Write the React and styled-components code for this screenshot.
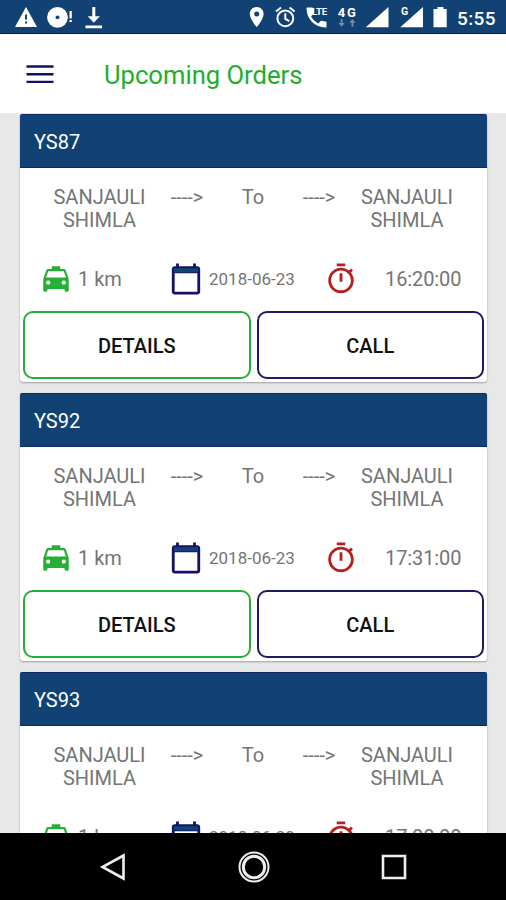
import React from "react";
import styled, { createGlobalStyle } from "styled-components";

const GlobalStyle = createGlobalStyle`
  * { box-sizing: border-box; }
  body {
    margin: 0;
    background: #e8e8e8;
    font-family: Roboto, "Noto Sans", sans-serif;
  }
`

const Screen = styled.div`
  display: flex;
  flex-direction: column;
  width: 506px;
  height: 900px;
  overflow: hidden;
  background: #e8e8e8;
`
const StatusBar = styled.div`
  flex: none;
  height: 34px;
  background: #114273;
  border-bottom: 1px solid #0b1a60;
`
const StatusIcons = styled.svg`
  display: block;
  width: 506px;
  height: 33px;
  fill: #fff;
`
const StatusText = styled.text`
  font-family: Roboto, sans-serif;
  font-weight: ${(props) => props.$weight || 500};
  font-size: ${(props) => props.$size}px;
`
const Header = styled.header`
  flex: none;
  display: flex;
  align-items: center;
  height: 79px;
  padding: 0 27px 0 26px;
  background: #fff;
`
const MenuIcon = styled.svg`
  display: block;
  width: 28px;
  height: 20px;
  stroke: #151061;
  stroke-width: 2.4;
`
const Title = styled.h1`
  margin: 2px 0 0 50px;
  font-size: 25.6px;
  font-weight: 400;
  line-height: 32px;
  color: #1fae2c;
  white-space: nowrap;
`
const OrderList = styled.main`
  flex: 1;
  min-height: 0;
  overflow: hidden;
  display: flex;
  flex-direction: column;
  gap: 11px;
  padding: 1px 19px 0 20px;
`
const Card = styled.section`
  flex: none;
  height: 268px;
  background: #fff;
  border-radius: 3px;
  box-shadow: 0 1px 2px rgba(0, 0, 0, 0.32);
`
const CardHeader = styled.div`
  display: flex;
  align-items: center;
  height: 54px;
  padding: 2px 14px 0;
  background: #114273;
  border: 1px solid #0d2b6b;
  border-width: 1px 0;
  border-radius: 2px 2px 0 0;
  color: #fff;
  font-size: 20px;
`
const Route = styled.div`
  display: grid;
  grid-template-columns: 109px 66px 66px 66px 110px;
  height: 87px;
  padding: 18px 25px 0;
  color: #757575;
  font-size: 20px;
  line-height: 23px;
  text-align: center;
`
const Info = styled.div`
  display: grid;
  grid-template-columns: 39px 91px 40px 115px 61px 1fr;
  align-items: center;
  height: 47px;
  padding: 0 0 0 19px;
  color: #757575;
  font-size: 20px;
  white-space: nowrap;
`
const InfoIcon = styled.svg`
  display: block;
  width: 34px;
  height: 34px;
  fill: ${(props) => props.$color};
`
const OrderDate = styled.span`
  font-size: 17px;
`
const Time = styled.span`
  letter-spacing: -0.1px;
`
const Actions = styled.div`
  display: flex;
  gap: 6px;
  padding: 9px 3px 0;
`
const ActionButton = styled.button`
  flex: 1;
  height: 68px;
  padding: 2px 0 0;
  border: 2px solid ${(props) => props.$color};
  border-radius: 10px;
  background: #fff;
  color: #111;
  font: 500 20px Roboto, sans-serif;
`
const NavBar = styled.nav`
  flex: none;
  display: flex;
  align-items: center;
  justify-content: space-between;
  height: 67px;
  padding: 0 95px 0 96px;
  background: #000;
`
const NavIcon = styled.svg`
  display: block;
  width: 34px;
  height: 34px;
  fill: none;
  stroke: #eee;
  stroke-width: 2.6;
`

const orders = [
  { id: "YS87", distance: "1 km", date: "2018-06-23", time: "16:20:00" },
  { id: "YS92", distance: "1 km", date: "2018-06-23", time: "17:31:00" },
  { id: "YS93", distance: "1 km", date: "2018-06-20", time: "17:00:00" },
]

const TaxiIcon = () => (
  <InfoIcon viewBox="0 0 24 24" $color="#27ae36">
    <path d="M18.92 6.01C18.72 5.42 18.16 5 17.5 5H15V3H9v2H6.5c-.66 0-1.21.42-1.42 1.01L3 12v8c0 .55.45 1 1 1h1c.55 0 1-.45 1-1v-1h12v1c0 .55.45 1 1 1h1c.55 0 1-.45 1-1v-8l-2.08-5.99zM6.5 16c-.83 0-1.5-.67-1.5-1.5S5.67 13 6.5 13s1.5.67 1.5 1.5S7.33 16 6.5 16zm11 0c-.83 0-1.5-.67-1.5-1.5s.67-1.5 1.5-1.5 1.5.67 1.5 1.5-.67 1.5-1.5 1.5zM5 11l1.5-4.5h11L19 11H5z" />
  </InfoIcon>
)

const CalendarIcon = () => (
  <InfoIcon viewBox="0 0 24 24" $color="#171269">
    <path d="M20 3h-1V1h-2v2H7V1H5v2H4c-1.1 0-2 .9-2 2v16c0 1.1.9 2 2 2h16c1.1 0 2-.9 2-2V5c0-1.1-.9-2-2-2zm0 18H4V8h16v13z" />
    <path fill="#114273" d="M3.5 4.3h17v3h-17z" />
  </InfoIcon>
)

const TimerIcon = () => (
  <InfoIcon viewBox="0 0 24 24" $color="#b51f1f">
    <path d="M15 1H9v2h6V1zm-4 13h2V8h-2v6zm8.03-6.61l1.42-1.42c-.43-.51-.9-.99-1.41-1.41l-1.42 1.42C16.07 4.74 14.12 4 12 4c-4.97 0-9 4.03-9 9s4.02 9 9 9 9-4.03 9-9c0-2.12-.74-4.07-1.97-5.61zM12 20c-3.87 0-7-3.13-7-7s3.13-7 7-7 7 3.13 7 7-3.13 7-7 7z" />
  </InfoIcon>
)

const Status = () => (
  <StatusBar>
    <StatusIcons viewBox="0 0 506 33">
      {/* notifications */}
      <path d="M26 7 37 27H15z" />
      <path d="M25 14.5h2v5h-2zm0 7h2v2h-2z" fill="#114273" />
      <circle cx="57.5" cy="17.3" r="10.4" />
      <circle cx="57.5" cy="17.3" r="1.9" fill="#114273" />
      <path d="M69.5 11h2.3v7.5h-2.3zm0 9h2.3v2h-2.3z" />
      <path d="M92.3 7h3v9.2h4.6l-6.1 6.6-6.1-6.6h4.6zM85.500 25.600h16.500v2.600H85.500z" />
      {/* location and alarm */}
      <path d="M256.700 7c-4 0-6.900 3-6.900 6.900 0 5 6.900 13.300 6.900 13.300s6.900-8.300 6.900-13.300c0-3.900-2.900-6.900-6.900-6.900zm0 9.400a2.500 2.500 0 1 1 0-5 2.500 2.500 0 0 1 0 5z" />
      <g fill="none" stroke="#fff" strokeWidth="2">
        <circle cx="285.300" cy="18.300" r="7.900" />
        <path d="M285.300 13.300v5.500l4 2.300M276 11.500l5-4M294.600 11.500l-5-4" />
      </g>
      {/* call over LTE */}
      <path d="M307.500 7.500c-.6 0-1 .4-1 1C306.500 19 315 27.400 325.500 27.400c.6 0 1-.4 1-1v-4c0-.6-.4-1-1-1-1.300 0-2.600-.2-3.700-.6-.4-.1-.8 0-1.100.3l-2.400 2.400c-3.100-1.600-5.600-4.100-7.200-7.200l2.300-2.400c.3-.3.4-.8.300-1.100-.4-1.200-.6-2.400-.6-3.700 0-.9-.4-1.600-1-1.600z" />
      <StatusText x="312" y="14.600" $size="9.500" $weight="700" textLength="15">LTE</StatusText>
      <StatusText x="337.800" y="17" $size="13" $weight="700" textLength="18">4G</StatusText>
      <path opacity=".4" d="M340.700 19h1.800v4h2.200l-3.100 3.700-3.100-3.700h2.200zM351.500 26.700h1.800v-4h2.200l-3.100-3.700-3.100 3.700h2.200z" />
      {/* signal and battery */}
      <path d="M388.500 7v20.300h-22.700z" />
      <path d="M423 7v20.300h-22.700z" />
      <path d="M399 5h10.500v11.500H399z" fill="#114273" />
      <StatusText x="401" y="15" $size="10.500" $weight="700">G</StatusText>
      <path d="M437.500 7h6v2h3.200v18.300h-13.200V9h4z" />
      <StatusText x="457" y="24.600" $size="19" textLength="38.500">5:55</StatusText>
    </StatusIcons>
  </StatusBar>
)

const OrderCard = ({ order }) => {
  return (
    <Card>
      <CardHeader>{order.id}</CardHeader>
      <Route>
        <span>SANJAULI SHIMLA</span>
        <span>----&gt;</span>
        <span>To</span>
        <span>----&gt;</span>
        <span>SANJAULI SHIMLA</span>
      </Route>
      <Info>
        <TaxiIcon />
        <span>{order.distance}</span>
        <CalendarIcon />
        <OrderDate>{order.date}</OrderDate>
        <TimerIcon />
        <Time>{order.time}</Time>
      </Info>
      <Actions>
        <ActionButton $color="#27ae36">DETAILS</ActionButton>
        <ActionButton $color="#1b1b68">CALL</ActionButton>
      </Actions>
    </Card>
  )
}

const App = () => {
  return (
    <>
      <GlobalStyle />
      <Screen>
        <Status />
        <Header>
          <MenuIcon viewBox="0 0 28 20">
            <path d="M.5 2.500h27M.5 10.200h27M.5 17.900h27" />
          </MenuIcon>
          <Title>Upcoming Orders</Title>
        </Header>
        <OrderList>
          {orders.map((order) => (
            <OrderCard key={order.id} order={order} />
          ))}
        </OrderList>
        <NavBar>
          <NavIcon viewBox="0 0 34 34">
            <path d="M27.500 5.500v23L6.500 17z" />
          </NavIcon>
          <NavIcon viewBox="0 0 34 34">
            <circle cx="17" cy="17" r="14.500" strokeWidth="2" />
            <circle cx="17" cy="17" r="10.700" strokeWidth="3" />
          </NavIcon>
          <NavIcon viewBox="0 0 34 34">
            <path d="M6 6h22v22H6z" />
          </NavIcon>
        </NavBar>
      </Screen>
    </>
  )
}

export default App
